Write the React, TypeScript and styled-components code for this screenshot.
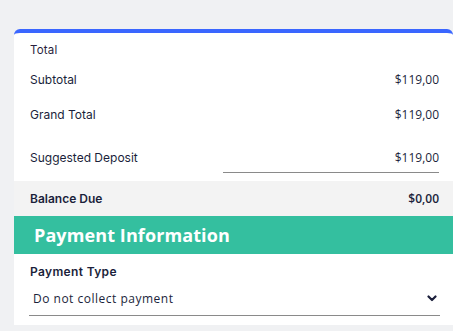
import React from "react";
import styled, { createGlobalStyle } from "styled-components";

const Global = createGlobalStyle`
  html, body { margin: 0; padding: 0; background: #f0f1f3; }
  body { font-family: "Inter", "Open Sans", sans-serif; color: #1b1f3b; }
`;

const Page = styled.div`
  padding: 29px 0 0 14px;
  height: 331px;
  box-sizing: border-box;
  overflow: hidden;
`;

const Card = styled.div`
  background: #ffffff;
  border-top: 4px solid #3a66ff;
  border-radius: 6px 6px 0 0;
  display: flex;
  flex-direction: column;
`;

const Title = styled.div`
  font-size: 11.5px;
  line-height: 16px;
  padding: 9px 14px 4px 16px;
  color: #2a1f3d;
  letter-spacing: 0.2px;
`;

const Row = styled.div<{ $h?: number }>`
  display: flex;
  align-items: center;
  justify-content: space-between;
  height: ${(p) => p.$h ?? 35}px;
  padding: 0 14px 0 16px;
  font-size: 12px;
`;

const Label = styled.span<{ $bold?: boolean }>`
  font-family: "Inter", "Open Sans", sans-serif;
  font-weight: ${(p) => (p.$bold ? 600 : 400)};
  font-size: 12px;
`;

const Value = styled.span<{ $bold?: boolean }>`
  font-family: "Open Sans", sans-serif;
  font-weight: ${(p) => (p.$bold ? 600 : 400)};
  font-size: 12px;
`;

const DepositRow = styled.div`
  display: flex;
  align-items: center;
  justify-content: space-between;
  padding: 10px 14px 8px 16px;
`;

const DepositBox = styled.div`
  width: 216px;
  height: 30px;
  display: flex;
  align-items: center;
  justify-content: flex-end;
  border-bottom: 1px solid #8a8a8a;
`;

const BalanceBand = styled(Row)`
  background: #f3f3f3;
`;

const SectionHeader = styled.div`
  background: #34bf9f;
  height: 38px;
  display: flex;
  align-items: center;
  padding-left: 20px;
  color: #ffffff;
  font-family: "Open Sans", sans-serif;
  font-weight: 700;
  font-size: 18px;
  letter-spacing: 0.1px;
`;

const Section = styled.div`
  padding: 10px 13px 9px 15px;
  display: flex;
  flex-direction: column;
  gap: 2px;
`;

const FieldLabel = styled.div`
  font-size: 12px;
  line-height: 16px;
  font-weight: 600;
  padding-left: 1px;
  letter-spacing: 0.35px;
`;

const Select = styled.div`
  height: 33px;
  display: flex;
  align-items: center;
  justify-content: space-between;
  padding: 0 3px 0 4px;
  border-bottom: 1px solid #8a8a8a;
  font-family: "Open Sans", sans-serif;
  font-size: 12px;
  font-weight: 400;
  letter-spacing: 0.5px;
`;

const Chevron = () => (
  <svg width="10" height="7" viewBox="0 0 10 7">
    <polyline points="1.5,1.5 5,5 8.5,1.5" fill="none" stroke="#1b1f3b" strokeWidth="2.2" strokeLinecap="round" strokeLinejoin="round" />
  </svg>
);

export default function App() {
  return (
    <>
      <Global />
      <Page>
        <Card>
          <Title>Total</Title>
          <Row>
            <Label>Subtotal</Label>
            <Value>$119,00</Value>
          </Row>
          <Row>
            <Label>Grand Total</Label>
            <Value>$119,00</Value>
          </Row>
          <DepositRow>
            <Label>Suggested Deposit</Label>
            <DepositBox>
              <Value>$119,00</Value>
            </DepositBox>
          </DepositRow>
          <BalanceBand>
            <Label $bold>Balance Due</Label>
            <Value $bold>$0,00</Value>
          </BalanceBand>
          <SectionHeader>Payment Information</SectionHeader>
          <Section>
            <FieldLabel>Payment Type</FieldLabel>
            <Select>
              <span>Do not collect payment</span>
              <Chevron />
            </Select>
          </Section>
        </Card>
      </Page>
    </>
  );
}
